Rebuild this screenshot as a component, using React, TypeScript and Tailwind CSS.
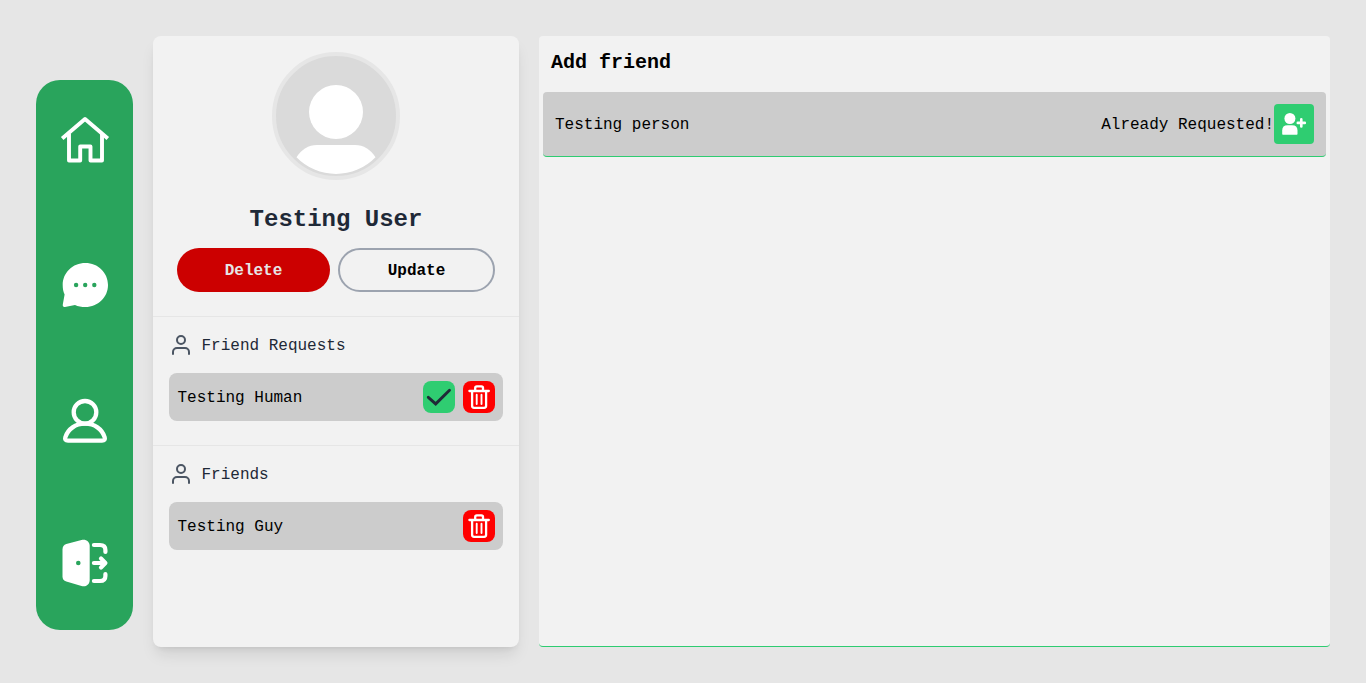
import type { ReactNode } from "react";

function HomeIcon() {
  return (
    <svg className="h-[50px] w-[50px]" viewBox="60 114 50 50" fill="none" stroke="#fff" strokeWidth="3.9" strokeLinejoin="round">
      <path d="M62.200 138.500 85 119l22.800 19.500" />
      <path d="M69 133.500v27h11.200v-14h10.300v14H102v-27" />
    </svg>
  );
}

function ChatIcon() {
  return (
    <svg className="h-[50px] w-[50px]" viewBox="60 260 50 50">
      <path fill="#fff" d="M85.400 263C98 263 108 272.700 108 285S98 307 85.400 307C81.500 307 78 306.200 75 304.900L65 306.900C63.300 307.200 62.500 306.200 62.800 304.500L64.600 294.500C63.200 291.500 62.700 288.500 62.700 285C62.700 272.700 72.600 263 85.400 263Z" />
      <g fill="#29a45c">
        <circle cx="76.100" cy="285" r="2.200" />
        <circle cx="85.200" cy="285" r="2.200" />
        <circle cx="94.300" cy="285" r="2.200" />
      </g>
    </svg>
  );
}

function ProfileIcon() {
  return (
    <svg className="h-[50px] w-[50px]" viewBox="60 396 50 50" fill="none" stroke="#fff" strokeWidth="4.300">
      <circle cx="85" cy="412.300" r="11.300" />
      <path d="M68 440.700H102C104.500 440.700 105.300 439.300 104.700 437.300C102 429 94.500 423.700 85 423.700S68 429 65.300 437.300C64.700 439.300 65.500 440.700 68 440.700Z" />
    </svg>
  );
}

function LogoutIcon() {
  return (
    <svg className="h-[50px] w-[50px]" viewBox="60 538 50 50">
      <path fill="#fff" d="M66.300 543.900 81.500 539.900C86 538.800 89.700 541.500 89.700 546V580C89.700 584.500 86 587.200 81.500 586.100L66.300 581.600C63.800 580.800 62.500 579 62.500 576.500V549.500C62.500 546.500 63.800 544.700 66.300 543.900Z" />
      <circle cx="78.300" cy="563" r="2.300" fill="#29a45c" />
      <g fill="none" stroke="#fff" strokeWidth="4.200" strokeLinecap="round" strokeLinejoin="round">
        <path d="M93.900 545H100C103.500 545 105.400 547 105.400 550V552M93.900 581H100C103.500 581 105.400 579 105.400 576V574" />
        <path d="M93.900 563H104M101 558.500 105.400 563 101 567.500" />
      </g>
    </svg>
  );
}

function Avatar() {
  return (
    <svg className="h-32 w-32 rounded-full border-4 border-[#e6e6e6] bg-[#dadada]" viewBox="276 56 120 120">
      <circle cx="336" cy="112" r="27" fill="#fff" />
      <path fill="#fff" d="M296.500 157.200C301.500 149.500 308.500 145 317 145H355C363.500 145 370.500 149.500 375.500 157.200A55 55 0 0 1 296.500 157.200Z" />
    </svg>
  );
}

function PersonIcon() {
  return (
    <svg className="h-6 w-6" viewBox="0 0 24 24" fill="none" stroke="#4b5563" strokeWidth="2" strokeLinecap="round" strokeLinejoin="round">
      <path d="M20 21v-2a4 4 0 0 0-4-4H8a4 4 0 0 0-4 4v2" />
      <circle cx="12" cy="7" r="4" />
    </svg>
  );
}

function AcceptButton() {
  return (
    <button className="h-8 w-8 rounded-lg bg-[#2fcd71]">
      <svg className="h-8 w-8" viewBox="0 0 32 32" fill="none" stroke="#1f2937" strokeWidth="2.900" strokeLinecap="round">
        <path d="M5.300 16.300 12.700 22.900 26.500 9.300" />
      </svg>
    </button>
  );
}

function TrashButton() {
  return (
    <button className="h-8 w-8 rounded-lg bg-[#ff0000]">
      <svg className="h-8 w-8" viewBox="0 0 32 32" fill="none" stroke="#fff" strokeWidth="2.300" strokeLinecap="round" strokeLinejoin="round">
        <path d="M6.400 10H25.800M12.200 9.500V7Q12.200 5.400 13.800 5.400H18.400Q20 5.400 20 7V9.500" />
        <path d="M9.100 10.500V24.800Q9.100 26.800 11.100 26.800H21.100Q23.100 26.800 23.100 24.800V10.500" />
        <path strokeWidth="1.900" d="M13.700 13.700V23M18.500 13.700V23" />
      </svg>
    </button>
  );
}

function Section({ title, name, children }: { title: string; name: string; children: ReactNode }) {
  return (
    <section className="border-t border-[#e6e6e6] px-4 pt-4 pb-6">
      <h2 className="flex h-6 items-center gap-2 text-[#1f2937]">
        <PersonIcon />
        <span className="pt-0.5 pl-[0.5px]">{title}</span>
      </h2>
      <div className="mt-4 flex h-12 items-center justify-between rounded-lg bg-[#cccccc] px-2">
        <span className="pt-0.5 pl-[0.5px]">{name}</span>
        <div className="flex gap-2">{children}</div>
      </div>
    </section>
  );
}

export default function App() {
  return (
    <div className="flex h-[683px] gap-5 overflow-hidden bg-[#e6e6e6] p-9 font-['Liberation_Mono',monospace] text-base text-black">
      <nav className="mt-11 flex h-[550px] w-[97px] flex-col gap-24 rounded-3xl bg-[#29a45c] pt-[34px] pl-6">
        <HomeIcon />
        <ChatIcon />
        <div className="-mt-[10px]">
          <ProfileIcon />
        </div>
        <div className="-mt-1">
          <LogoutIcon />
        </div>
      </nav>

      <aside className="h-[611px] w-[366px] rounded-lg bg-[#f2f2f2] shadow-lg">
        <div className="flex flex-col items-center px-6 pt-4 pb-6">
          <Avatar />
          <h1 className="mt-6 text-2xl font-bold text-[#1f2937]">Testing User</h1>
          <div className="mt-3 flex gap-2">
            <button className="h-11 w-[153px] rounded-full bg-[#cc0000] pt-0.5 font-semibold text-[#e6e6e6]">Delete</button>
            <button className="h-11 w-[157px] rounded-full border-2 border-[#9ca3af] pt-0.5 font-semibold">Update</button>
          </div>
        </div>
        <Section title="Friend Requests" name="Testing Human">
          <AcceptButton />
          <TrashButton />
        </Section>
        <Section title="Friends" name="Testing Guy">
          <TrashButton />
        </Section>
      </aside>

      <main className="h-[611px] flex-1 rounded border-b border-[#2ecc71] bg-[#f2f2f2] px-1">
        <h2 className="px-2 pt-[13px] text-xl font-bold">Add friend</h2>
        <div className="mt-[15px] flex h-[65px] items-center justify-between rounded border-b border-[#2ecc71] bg-[#cccccc] px-3">
          <span className="pt-0.5">Testing person</span>
          <div className="flex items-center">
            <span className="pt-0.5">Already Requested!</span>
            <button className="h-10 w-10 rounded bg-[#2fcd71]">
              <svg className="h-10 w-10" viewBox="0 0 40 40" fill="#fff">
                <circle cx="15.900" cy="14.500" r="5.500" />
                <path d="M8.200 30V26.500Q8.200 21.200 13.500 21.200H18Q23.500 21.200 23.500 26.500V30Q23.500 30.700 22.800 30.700H8.900Q8.200 30.700 8.200 30Z" />
                <path fill="none" stroke="#fff" strokeWidth="2.600" strokeLinecap="round" d="M27.300 15.400V22.400M23.800 18.900H30.800" />
              </svg>
            </button>
          </div>
        </div>
      </main>
    </div>
  );
}
